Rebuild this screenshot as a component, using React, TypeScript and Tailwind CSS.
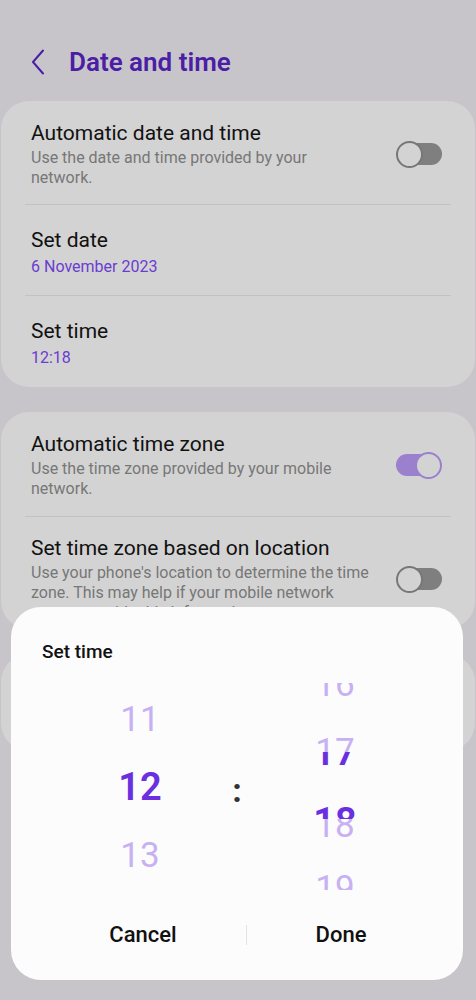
import type { ReactNode } from "react";

type Item = { value: string; top: number };

const Toggle = ({ on }: { on: boolean }) => (
  <div className="relative h-[26px] w-[46px] shrink-0">
    <span
      className={
        on
          ? "absolute top-[2px] bottom-[2px] left-0 right-[6px] rounded-full bg-[#9a80cd]"
          : "absolute top-[2px] bottom-[2px] left-[4px] right-0 rounded-full bg-[#7f7f7f]"
      }
    />
    <span
      className={
        on
          ? "absolute top-0 right-0 size-[27px] rounded-full border-2 border-[#9a80cd] bg-[#d3d3d3]"
          : "absolute top-0 left-0 size-[27px] rounded-full border-2 border-[#777777] bg-[#d3d3d3]"
      }
    />
  </div>
);

const Row = ({
  title,
  sub,
  accent,
  toggle,
  className,
}: {
  title: string;
  sub: ReactNode;
  accent?: boolean;
  toggle?: boolean;
  className: string;
}) => (
  <div className={`flex items-center justify-between pl-[30px] pr-[33px] ${className}`}>
    <div className="flex flex-col">
      <span className="text-[21px] leading-[26px] text-[#111111]">{title}</span>
      <span
        className={
          accent
            ? "mt-[4px] text-[16px] leading-[20px] text-[#6a3cd0]"
            : "mt-[2px] text-[16px] leading-[20px] text-[#777777]"
        }
      >
        {sub}
      </span>
    </div>
    {toggle !== undefined && <Toggle on={toggle} />}
  </div>
);

const Divider = () => <div className="mx-[24px] h-px bg-[#c2c2c2]" />;

const Column = ({
  items,
  width,
  bold,
}: {
  items: Item[];
  width: string;
  bold?: boolean;
}) => (
  <div className={`relative h-full ${width}`}>
    {items.map((it) => (
      <span
        key={it.value}
        className={
          bold
            ? "absolute inset-x-0 text-center text-[38px] leading-none font-semibold text-[#6b2fe0]"
            : "absolute inset-x-0 text-center text-[35px] leading-none text-[#c7b1f3]"
        }
        style={{ top: it.top }}
      >
        {it.value}
      </span>
    ))}
  </div>
);

export default function App() {
  return (
    <div className="relative h-[1000px] w-full overflow-hidden bg-[#c8c5ca] font-[Roboto,sans-serif]">
      <header className="flex items-center pt-[46px] pb-[23px]">
        <svg
          width="14"
          height="26"
          viewBox="0 0 14 26"
          className="ml-[31px]"
          fill="none"
          stroke="#4b1ea6"
          strokeWidth="2"
          strokeLinecap="round"
          strokeLinejoin="round"
        >
          <polyline points="12,1.5 2,13 12,24.5" />
        </svg>
        <h1 className="ml-[24px] text-[26px] leading-[32px] font-semibold text-[#4b1ea6]">
          Date and time
        </h1>
      </header>

      <div className="mx-px flex flex-col gap-[25px]">
        <section className="rounded-[28px] bg-[#d3d3d3]">
          <Row
            title="Automatic date and time"
            sub={
              <>
                Use the date and time provided by your
                <br />
                network.
              </>
            }
            toggle={false}
            className="pt-[19px] pb-[16px]"
          />
          <Divider />
          <Row title="Set date" sub="6 November 2023" accent className="pt-[22px] pb-[18px]" />
          <Divider />
          <Row title="Set time" sub="12:18" accent className="pt-[22px] pb-[19px]" />
        </section>

        <section className="rounded-[28px] bg-[#d3d3d3]">
          <Row
            title="Automatic time zone"
            sub={
              <>
                Use the time zone provided by your mobile
                <br />
                network.
              </>
            }
            toggle
            className="pt-[19px] pb-[17px]"
          />
          <Divider />
          <Row
            title="Set time zone based on location"
            sub={
              <>
                Use your phone's location to determine the time
                <br />
                zone. This may help if your mobile network
                <br />
                cannot provide this information.
              </>
            }
            toggle={false}
            className="pt-[18px] pb-[6px]"
          />
        </section>

        <section className="rounded-[28px] bg-[#d3d3d3]">
          <Row title="Time zone" sub="GMT+01:00 Central European Standard Time" className="pt-[22px] pb-[27px]" />
        </section>
      </div>

      <div className="absolute top-[607px] left-[11px] w-[452px] rounded-[30px] bg-[#fcfcfc] pt-[33px] pb-[31px]">
        <h2 className="pl-[31px] text-[19px] leading-[24px] font-medium text-[#111111]">Set time</h2>

        <div className="relative mt-[19px] h-[207px] overflow-hidden">
          <div className="flex h-full pl-[69px]">
            <Column
              width="w-[120px]"
              items={[
                { value: "11", top: 19 },
                { value: "13", top: 155 },
              ]}
            />
            <div className="w-[74px]" />
            <Column
              width="w-[122px]"
              items={[
                { value: "16", top: -16 },
                { value: "17", top: 51 },
                { value: "18", top: 125 },
                { value: "19", top: 188 },
              ]}
            />
          </div>

          <div className="absolute inset-x-0 top-[69px] h-[67px] overflow-hidden bg-[#fcfcfc]">
            <div className="flex h-full pl-[69px]">
              <Column width="w-[120px]" bold items={[{ value: "12", top: 16 }]} />
              <div className="relative h-full w-[74px]">
                <span className="absolute inset-x-0 top-[21px] text-center text-[34px] leading-none font-bold text-[#333333]">
                  :
                </span>
              </div>
              <Column
                width="w-[122px]"
                bold
                items={[
                  { value: "17", top: -19 },
                  { value: "18", top: 51 },
                ]}
              />
            </div>
          </div>
        </div>

        <div className="mt-[31px] flex items-center pl-[29px]">
          <button className="w-[206px] text-center text-[22px] leading-[28px] font-medium text-[#111111]">
            Cancel
          </button>
          <span className="h-[20px] w-px bg-[#e3e3e3]" />
          <button className="w-[188px] text-center text-[22px] leading-[28px] font-medium text-[#111111]">
            Done
          </button>
        </div>
      </div>
    </div>
  );
}
